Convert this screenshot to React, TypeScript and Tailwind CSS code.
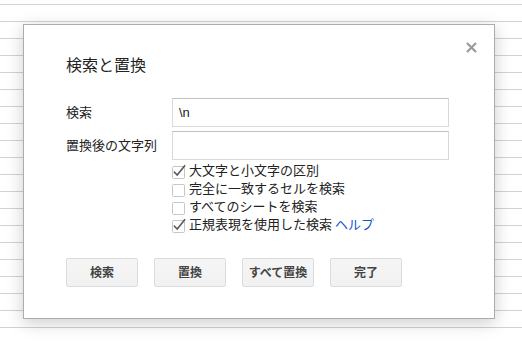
import React from "react";

const FONT = { fontFamily: '"Liberation Sans", Arial, "Noto Sans CJK JP", sans-serif' };

function Check({ checked }: { checked: boolean }) {
  return (
    <svg width="15" height="15" viewBox="0 0 15 15" className="shrink-0">
      <rect x="0.5" y="2.5" width="12" height="12" rx="1" fill="white" stroke="#c6c6c6" />
      {checked && (
        <path d="M2.5 8.2 L5.2 11 L12.6 1.8" fill="none" stroke="#5a5a5a" strokeWidth="1.6" strokeLinecap="square" />
      )}
    </svg>
  );
}

const options = [
  { label: "大文字と小文字の区別", checked: true },
  { label: "完全に一致するセルを検索", checked: false },
  { label: "すべてのシートを検索", checked: false },
  { label: "正規表現を使用した検索", checked: true, help: true },
];

export default function App() {
  return (
    <div className="relative w-[522px] h-[343px] overflow-hidden bg-white" style={FONT}>
      <div className="flex flex-col pt-[4px]">
        {Array.from({ length: 20 }).map((_, i) => (
          <div key={i} className="h-[17px] shrink-0 border-t border-[#d2d2d2]" />
        ))}
      </div>

      <div className="absolute left-[23px] top-[24px] w-[472px] h-[295px] bg-white border border-[#acacac] shadow-[0_4px_16px_rgba(0,0,0,0.2)] pl-[42px] pt-[29px] flex flex-col">
        <svg
          className="absolute left-[442px] top-[17px]"
          width="11"
          height="11"
          viewBox="0 0 11 11"
        >
          <path d="M1 1 L10 10 M10 1 L1 10" stroke="#9a9a9a" strokeWidth="2.2" />
        </svg>

        <div className="text-[16px] leading-[24px] text-[#222]">検索と置換</div>

        <div className="mt-[20px] flex items-center">
          <div className="w-[106px] text-[13px] text-[#222]">検索</div>
          <div className="w-[277px] h-[29px] border border-[#d9d9d9] border-t-[#c0c0c0] flex items-center px-[6px] text-[13px] text-[#222]">
            \n
          </div>
        </div>
        <div className="mt-[4px] flex items-center">
          <div className="w-[106px] text-[13px] text-[#222]">置換後の文字列</div>
          <div className="w-[277px] h-[29px] border border-[#d9d9d9] border-t-[#c0c0c0]" />
        </div>

        <div className="mt-[2px] ml-[106px] flex flex-col">
          {options.map((o) => (
            <div key={o.label} className="h-[18px] flex items-center gap-[2px] text-[13px] text-[#222]">
              <Check checked={o.checked} />
              <span>{o.label}</span>
              {o.help && <span className="ml-[1px] text-[#1155cc]">ヘルプ</span>}
            </div>
          ))}
        </div>

        <div className="mt-[24px] flex gap-[16px]">
          {["検索", "置換", "すべて置換", "完了"].map((b) => (
            <div
              key={b}
              className="w-[72px] h-[29px] flex items-center justify-center rounded-[2px] border border-[#dcdcdc] bg-gradient-to-b from-[#f5f5f5] to-[#f1f1f1] text-[12px] font-bold text-[#444]"
            >
              {b}
            </div>
          ))}
        </div>
      </div>
    </div>
  );
}
